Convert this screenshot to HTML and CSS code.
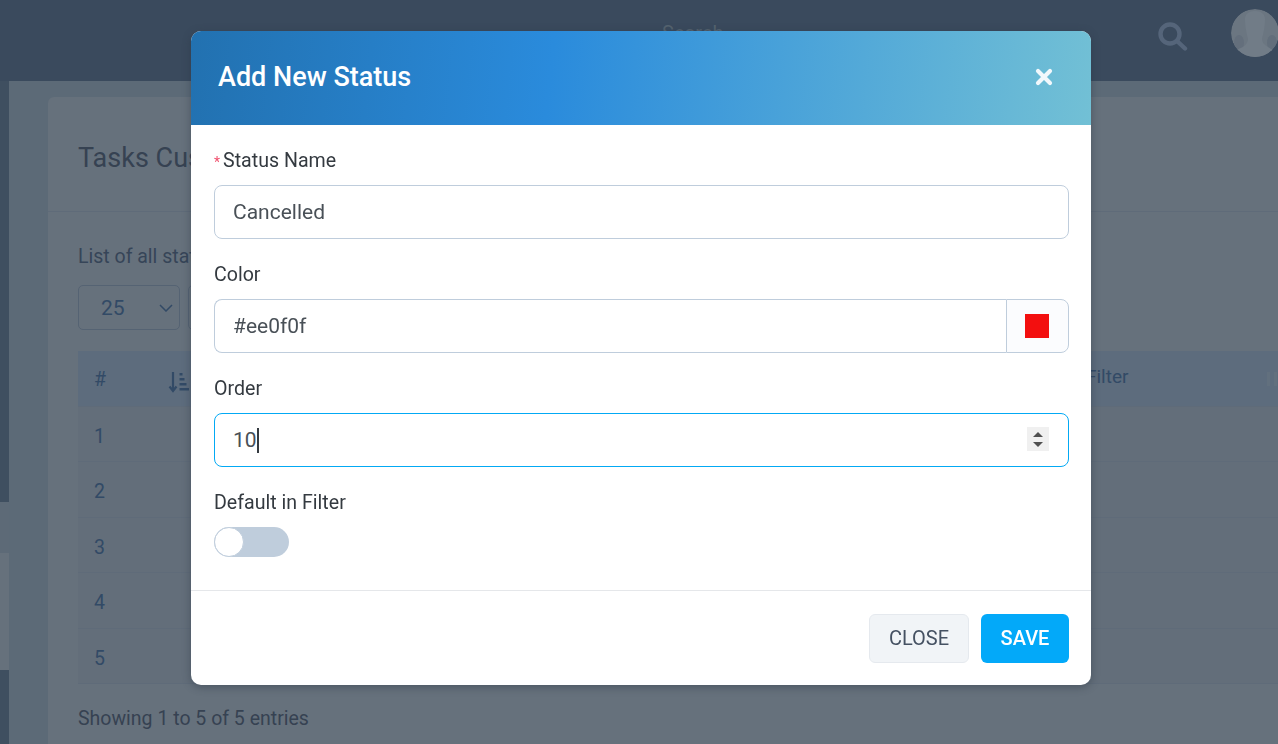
FILE: index.html
```html
<!DOCTYPE html>
<html lang="en">
<head>
<meta charset="utf-8">
<title>Add New Status</title>
<link rel="stylesheet" href="styles.css">
</head>
<body>
<div class="page">
  <header class="topbar">
    <span class="search-label">Search</span>
    <svg class="search-icon" viewBox="0 0 30 30" aria-hidden="true"><circle cx="12" cy="12" r="9.5" fill="none" stroke="currentColor" stroke-width="4.4"/><path d="M19 19l8 7.500" fill="none" stroke="currentColor" stroke-width="4.4" stroke-linecap="round"/></svg>
    <div class="avatar"><svg viewBox="0 0 48 48" aria-hidden="true"><circle cx="24" cy="24" r="24" fill="#6b7681"/><ellipse cx="8" cy="34" rx="5" ry="8" fill="#646f7c"/><ellipse cx="41" cy="34" rx="5" ry="8" fill="#626e7b"/><path d="M14 10c0-5 4-8 10-8s10 3 10 8c0 8-2 16-3 20 0 3 2 6 6 8 3 2 5 3 6 4l-4 6H6l-3-5c2-2 6-4 9-5 3-2 5-5 5-8-1-4-3-12-3-20z" fill="#717c87"/></svg></div>
  </header>
  <div class="workspace">
    <nav class="rail">
      <div class="rail-dark"></div>
      <div class="rail-mid"></div>
      <div class="rail-light"></div>
      <div class="rail-dark rail-end"></div>
    </nav>
    <main class="content">
      <section class="card">
        <h1 class="card-title">Tasks Custom Statuses</h1>
        <div class="card-body">
          <p class="card-note">List of all statuses</p>
          <div class="toolbar">
            <div class="page-size"><span>25</span><svg viewBox="0 0 14 8" aria-hidden="true"><path d="M1 1l6 6 6-6" fill="none" stroke="currentColor" stroke-width="1.5"/></svg></div>
            <div class="tool-button"></div>
          </div>
          <div class="table">
            <div class="row head">
              <span class="num">#</span>
              <svg class="sort-icon" viewBox="0 0 21 21" aria-hidden="true"><path d="M5 0v19M1.500 14.500L5 19l3.500-4.500" fill="none" stroke="currentColor" stroke-width="2.200"/><path d="M11.500 1h3v2.500h-3zM11.500 6h5v2.500h-5zM11.500 11h7v2.500h-7zM11.500 16h9.500v2.500h-9.500z" fill="currentColor"/></svg>
              <span class="filter-col">Filter</span>
              <svg class="sort-faint" viewBox="0 0 12 16" aria-hidden="true"><path d="M1 1h3v14H1zM8 1h3v14H8z" fill="currentColor"/></svg>
            </div>
            <div class="row"><span class="num">1</span></div>
            <div class="row"><span class="num">2</span></div>
            <div class="row"><span class="num">3</span></div>
            <div class="row"><span class="num">4</span></div>
            <div class="row"><span class="num">5</span></div>
          </div>
          <p class="entries">Showing 1 to 5 of 5 entries</p>
        </div>
      </section>
    </main>
  </div>
</div>

<div class="modal-layer">
  <div class="modal">
    <div class="modal-head">
      <h2 class="modal-title">Add New Status</h2>
      <svg class="modal-x" viewBox="0 0 18 18" aria-hidden="true"><path d="M3 3l12 12M15 3L3 15" fill="none" stroke="currentColor" stroke-width="4.200" stroke-linecap="round"/></svg>
    </div>
    <div class="modal-body">
      <div class="form-group">
        <label class="form-label"><span class="req">*</span>Status Name</label>
        <input class="field" type="text" value="Cancelled">
      </div>
      <div class="form-group">
        <label class="form-label">Color</label>
        <div class="color-group">
          <input class="field color-input" type="text" value="#ee0f0f">
          <div class="color-addon"><span class="swatch"></span></div>
        </div>
      </div>
      <div class="form-group">
        <label class="form-label">Order</label>
        <div class="field field-focus">
          <span>10</span><span class="caret"></span>
          <span class="spinner"><i class="up"></i><i class="down"></i></span>
        </div>
      </div>
      <div class="form-group last">
        <label class="form-label">Default in Filter</label>
        <div class="switch"><span class="knob"></span></div>
      </div>
    </div>
    <div class="modal-foot">
      <button class="btn btn-close" type="button">CLOSE</button>
      <button class="btn btn-save" type="button">SAVE</button>
    </div>
  </div>
</div>
</body>
</html>
```
FILE: styles.css
```css
* { box-sizing: border-box; }
html, body { margin: 0; height: 100%; overflow: hidden; }
body { font-family: Roboto, "Liberation Sans", sans-serif; font-size: 19.5px; color: #3b4656; background: #66727f; }

.page { height: 744px; display: flex; flex-direction: column; }
.topbar { height: 81px; flex: none; background: #3a4a5d; display: flex; align-items: flex-start; padding: 9px 0 0 662px; position: relative; overflow: hidden; }
.search-label { color: #55636f; font-size: 20px; line-height: 48px; }
.search-icon { width: 30px; height: 30px; color: #55657a; margin: 13px 0 0 435px; flex: none; }
.avatar { width: 48px; height: 48px; border-radius: 50%; overflow: hidden; margin-left: 43px; flex: none; }
.avatar svg { display: block; width: 48px; height: 48px; }

.workspace { flex: 1; display: flex; min-height: 0; }
.rail { width: 9px; flex: none; background: #5f6b78; display: flex; flex-direction: column; }
.rail-dark { height: 421px; background: #3f4f60; }
.rail-mid { height: 51px; background: #5d6a77; }
.rail-light { height: 117px; background: #66717c; }
.rail-end { height: 74px; }

.content { flex: 1; padding: 16px 0 0 39px; background: #5c6a77; min-width: 0; overflow: hidden; }
.card { background: #66717c; border-radius: 6px 0 0 0; height: 100%; }
.card-title { margin: 0; height: 115px; padding: 45px 30px 0; font-weight: 400; font-size: 27px; line-height: 32px; color: #364252; border-bottom: 1px solid #5f6b79; white-space: nowrap; }
.card-body { padding: 32px 30px 0; }
.card-note { margin: 0; line-height: 26px; color: #364558; }
.toolbar { display: flex; gap: 8px; margin-top: 15px; }
.page-size { width: 102px; height: 45px; border: 1px solid #556373; border-radius: 5px; display: flex; align-items: center; justify-content: space-between; padding: 0 6px 0 22px; font-size: 21px; color: #324a66; }
.page-size svg { width: 14px; height: 8px; color: #324a66; }
.tool-button { width: 60px; height: 45px; border: 1px solid #556373; border-radius: 5px; }
.table { margin-top: 21px; margin-right: -60px; }
.row { height: 55.5px; display: flex; align-items: center; padding-top: 5px; border-bottom: 1px solid #5f6b79; background: #636e7a; position: relative; }
.row.head { background: #5d6c7d; color: #324a66; padding-top: 2px; }
.num { width: 90px; padding-left: 16px; color: #324a66; font-size: 19.5px; }
.sort-icon { width: 21px; height: 21px; color: #324a66; margin-top: 6px; }
.filter-col { position: absolute; left: 1008px; top: 14px; color: #324a66; font-size: 19px; }
.sort-faint { position: absolute; left: 1188px; width: 12px; height: 16px; color: #62707e; }
.entries { margin: 22px 0 0; line-height: 26px; color: #364252; }

.modal-layer { position: fixed; inset: 0; display: flex; justify-content: center; align-items: flex-start; padding: 31px 187px 0 191px; }
.modal { width: 900px; height: 654px; background: #fff; border-radius: 10px; box-shadow: 0 2px 8px rgba(40, 50, 65, .45); display: flex; flex-direction: column; overflow: hidden; }
.modal-head { height: 94px; flex: none; background: linear-gradient(96deg, #2271b0 0%, #2a8bdc 40%, #72c0d5 100%); display: flex; align-items: center; justify-content: space-between; padding: 0 38px 2px 27px; }
.modal-title { margin: 0; font-weight: 500; font-size: 27px; color: #fff; }
.modal-x { width: 18px; height: 18px; color: #f2f8fc; }
.modal-body { flex: 1; padding: 24px 22px 0 23px; }
.form-group { margin-bottom: 24px; }
.form-group.last { margin-bottom: 0; }
.form-label { display: block; height: 24px; line-height: 24px; font-size: 19.6px; color: #343a40; margin-bottom: 12px; }
.req { color: #f0506e; font-size: 14px; margin-right: 3px; }
.field { display: flex; align-items: center; width: 100%; height: 54px; border: 1px solid #bfcddc; border-radius: 8px; padding: 0 18px; font-family: inherit; font-size: 21px; color: #495057; background: #fff; outline: none; position: relative; }
.field-focus { border-color: #03a9f4; }
.caret { width: 2px; height: 25px; background: #343a40; }
.spinner { position: absolute; right: 19px; top: 13px; width: 22px; height: 24px; background: #f0f0f0; display: flex; flex-direction: column; align-items: center; justify-content: center; gap: 5px; }
.spinner i { display: block; width: 0; height: 0; border-left: 5px solid transparent; border-right: 5px solid transparent; }
.spinner .up { border-bottom: 5px solid #505050; }
.spinner .down { border-top: 5px solid #505050; }
.color-group { display: flex; height: 54px; }
.color-input { flex: 1; border-radius: 8px 0 0 8px; border-right: 0; }
.color-addon { width: 63px; border: 1px solid #bfcddc; border-radius: 0 8px 8px 0; background: #fbfcfe; display: flex; align-items: center; justify-content: center; padding-right: 1px; }
.swatch { width: 24px; height: 24px; background: #f30f0f; }
.switch { width: 75px; height: 30px; border-radius: 15px; background: #bfcddc; }
.knob { display: block; width: 30px; height: 30px; border-radius: 50%; background: #fff; border: 1px solid #bfcddc; }
.modal-foot { height: 95px; flex: none; border-top: 1px solid #e5e7ea; display: flex; justify-content: flex-end; align-items: flex-start; gap: 12px; padding: 23px 22px 0 0; }
.btn { height: 49px; border-radius: 6px; font-family: inherit; font-size: 20px; padding: 0 0 2px; cursor: pointer; }
.btn-close { width: 100px; background: #f1f4f7; border: 1px solid #e5e9ee; color: #455162; }
.btn-save { width: 88px; background: #03a9f9; border: 0; color: #fff; font-weight: 500; }
```
